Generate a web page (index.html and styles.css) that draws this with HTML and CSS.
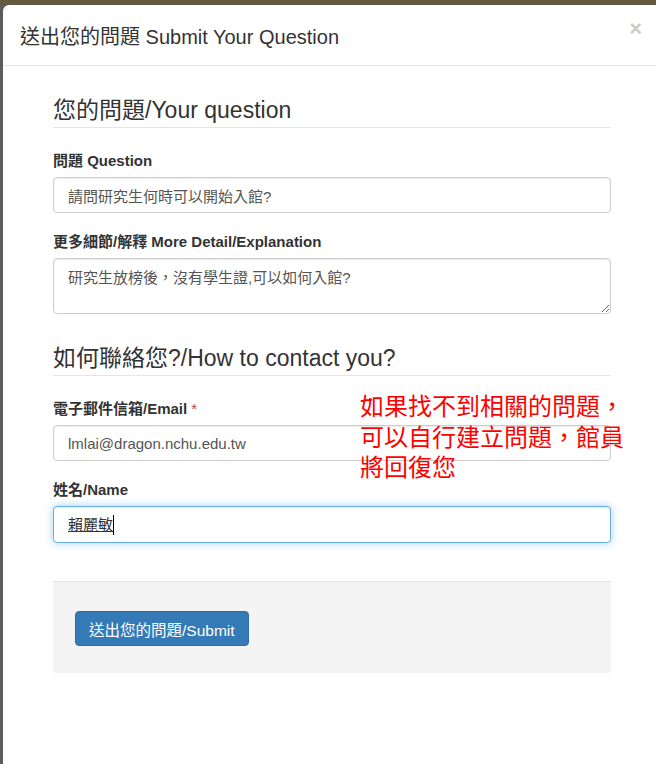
FILE: index.html
```html
<!DOCTYPE html>
<html lang="zh-Hant">
<head>
    <meta charset="UTF-8">
    <meta name="viewport" content="width=device-width, initial-scale=1.0">
    <title>送出您的問題 Submit Your Question</title>
    <link rel="stylesheet" href="styles.css">
</head>
<body>
    <div class="modal">
        <div class="modal-header">
            <h4 class="modal-title">送出您的問題 Submit Your Question</h4>
            <button class="close" type="button">&times;</button>
        </div>
        <div class="modal-body">
            <form class="question-form">
                <fieldset class="question-set">
                    <legend>您的問題/Your question</legend>
                    <div class="form-group">
                        <label for="question">問題 Question</label>
                        <input class="form-control" id="question" type="text" value="請問研究生何時可以開始入館?">
                    </div>
                    <div class="form-group">
                        <label for="detail">更多細節/解釋 More Detail/Explanation</label>
                        <textarea class="form-control detail" id="detail">研究生放榜後，沒有學生證,可以如何入館?</textarea>
                    </div>
                </fieldset>

                <fieldset class="contact-set">
                    <legend>如何聯絡您?/How to contact you?</legend>
                    <div class="contact-fields">
                        <div class="form-group">
                            <label for="email">電子郵件信箱/Email <span class="required">*</span></label>
                            <input class="form-control" id="email" type="text" value="lmlai@dragon.nchu.edu.tw">
                        </div>
                        <div class="form-group">
                            <label for="name">姓名/Name</label>
                            <div class="form-control is-focused" id="name"><span class="composing">賴麗敏</span><span class="caret"></span></div>
                        </div>
                        <!-- 說明 -->
                        <p class="note">如果找不到相關的問題，<br>可以自行建立問題，館員<br>將回復您</p>
                    </div>
                </fieldset>

                <div class="form-actions">
                    <button class="btn-primary" type="button">送出您的問題/Submit</button>
                </div>
            </form>
        </div>
    </div>
</body>
</html>
```

FILE: styles.css
```css
html, body {
    height: 100%;
}
body {
    margin: 0;
    padding: 5px 0 0 3px;
    box-sizing: border-box;
    overflow: hidden;
    font-family: "Liberation Sans", "Noto Sans CJK TC", sans-serif;
    font-size: 15px;
    color: #333;
    background: linear-gradient(to bottom, #655a41 0, #655a41 5px, #5c5c5c 5px);
}
.modal {
    background-color: #fff;
    border-radius: 6px 0 0 0;
    min-height: 100%;
}
.modal-header {
    display: flex;
    align-items: center;
    justify-content: space-between;
    height: 60px;
    padding: 0 14px 0 17px;
    border-bottom: 1px solid #e5e5e5;
}
.modal-title {
    margin: 0;
    font-size: 20px;
    font-weight: normal;
    color: #333;
}
.close {
    margin-bottom: 12px;
    padding: 0;
    border: 0;
    background: none;
    font-family: "Liberation Sans", sans-serif;
    font-size: 22px;
    font-weight: bold;
    line-height: 1;
    color: #000;
    opacity: .2;
}
.modal-body {
    padding: 28px 45px 40px 50px;
}
fieldset {
    margin: 0;
    padding: 0;
    border: 0;
    min-width: 0;
}
legend {
    display: block;
    width: 100%;
    padding: 0;
    margin-bottom: 22px;
    font-size: 23px;
    line-height: 33px;
    color: #333;
    border-bottom: 1px solid #e5e5e5;
}
.contact-set {
    margin-top: 10px;
}
.contact-fields {
    position: relative;
}
.form-group {
    margin-bottom: 18px;
}
.contact-fields .form-group:last-of-type {
    margin-bottom: 0;
}
label {
    display: block;
    margin-bottom: 6px;
    font-size: 15px;
    line-height: 21px;
    font-weight: bold;
}
.required {
    color: #b94a48;
    font-weight: normal;
}
.form-control {
    display: block;
    width: 100%;
    height: 36px;
    box-sizing: border-box;
    padding: 0 14px;
    font-family: inherit;
    font-size: 15px;
    line-height: 21px;
    color: #555;
    background-color: #fff;
    border: 1px solid #ccc;
    border-radius: 4px;
    box-shadow: inset 0 1px 1px rgba(0, 0, 0, .075);
}
.detail {
    height: 56px;
    padding-top: 8px;
    resize: vertical;
}
.is-focused {
    display: flex;
    align-items: center;
    height: 37px;
    color: #333;
    border-color: #66afe9;
    box-shadow: inset 0 1px 1px rgba(0, 0, 0, .075), 0 0 8px rgba(102, 175, 233, .6);
}
.composing {
    text-decoration: underline;
}
.caret {
    display: inline-block;
    width: 1px;
    height: 20px;
    background-color: #000;
}
.note {
    position: absolute;
    top: -6px;
    left: 307px;
    margin: 0;
    font-size: 24px;
    line-height: 30.5px;
    color: #ff0000;
    white-space: nowrap;
}
.form-actions {
    margin-top: 38px;
    padding: 29px 22px 27px;
    background-color: #f4f4f4;
    border-top: 1px solid #e5e5e5;
}
.btn-primary {
    height: 35px;
    padding: 0 13px;
    font-family: inherit;
    font-size: 15.5px;
    color: #fff;
    background-color: #337ab7;
    border: 1px solid #2e6da4;
    border-radius: 4px;
}
```
